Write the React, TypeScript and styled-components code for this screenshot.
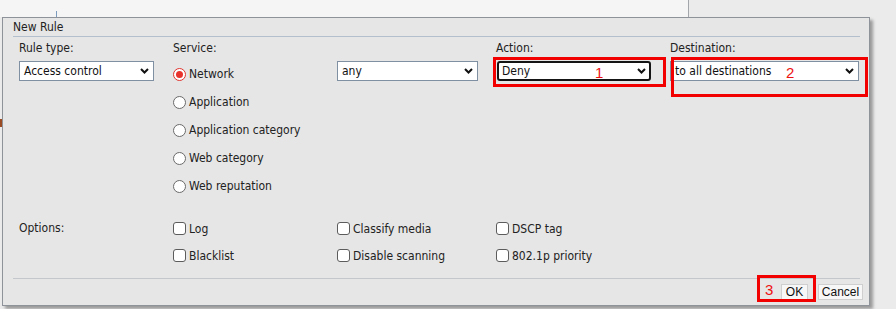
import React from 'react';
import styled, { createGlobalStyle } from 'styled-components';

const Global = createGlobalStyle`
  html, body { margin: 0; padding: 0; }
  body {
    background: #ebebeb;
    font-family: "DejaVu Sans Condensed", "DejaVu Sans", Verdana, sans-serif;
    font-size: 12px;
    color: #222;
    width: 896px;
    height: 309px;
    overflow: hidden;
  }
`;

const Page = styled.div`
  position: relative;
  width: 896px;
  height: 309px;
  background: #ebebeb;
`;

const TopStrip = styled.div`
  display: flex;
  height: 17px;
`;

const BackPanel = styled.div`
  width: 689px;
  height: 17px;
  background: #f5f5f5;
  border-right: 1px solid #a3a6aa;
  display: flex;
  align-items: flex-end;
  padding-left: 56px;
  box-sizing: border-box;
`;

const Tick = styled.div`
  width: 1px;
  height: 6px;
  background: #7d9bbd;
`;

const EdgeMark = styled.div`
  position: absolute;
  left: 0;
  top: 119px;
  width: 2px;
  height: 8px;
  background: #9a4b24;
`;

const Dialog = styled.div`
  margin-left: 2px;
  width: 868px;
  box-sizing: border-box;
  background: #e6e6e6;
  border: 1px solid #8d9399;
  box-shadow: 3px 3px 3px rgba(0, 0, 0, 0.35);
  display: flex;
  flex-direction: column;
`;

const TitleBar = styled.div`
  height: 18px;
  line-height: 18px;
  padding-left: 10px;
  color: #222;
`;

const Divider = styled.div`
  margin: 0 9px 0 10px;
  height: 1px;
  background: #b3bfcc;
`;

const FooterDivider = styled(Divider)`
  margin-top: 9px;
  background: #c4c8cc;
`;

const Body = styled.div`
  padding-left: 16px;
`;

const FieldGrid = styled.div`
  display: grid;
  grid-template-columns: 154px 164px 159px 174px 190px;
  align-items: start;
`;

const OptionGrid = styled(FieldGrid)`
  margin-top: 15px;
`;

const Field = styled.div<{ $indent?: number }>`
  display: flex;
  flex-direction: column;
  padding-left: ${(p) => p.$indent ?? 0}px;
`;

const Label = styled.div`
  height: 14px;
  line-height: 14px;
  margin-top: 4px;
  margin-bottom: 6px;
`;

const SelectBox = styled.div<{ $w: number; $focus?: boolean }>`
  position: relative;
  width: ${(p) => p.$w}px;
  height: 20px;
  box-sizing: border-box;
  display: flex;
  align-items: center;
  justify-content: space-between;
  background: #fff;
  border: ${(p) => (p.$focus ? '2px solid #151515' : '1px solid #7f90a3')};
  border-radius: ${(p) => (p.$focus ? '3px' : '0')};
  padding: 0 ${(p) => (p.$focus ? '3px' : '4px')} 0 ${(p) => (p.$focus ? '3px' : '4px')};
  color: #111;
`;

const Mark = styled.div`
  position: absolute;
  border: 3px solid #f20000;
  box-sizing: border-box;
  pointer-events: none;
`;

const Num = styled.span`
  position: absolute;
  font-family: "Liberation Sans", Arial, sans-serif;
  font-size: 15px;
  line-height: 15px;
  color: #ee1111;
`;

const RadioList = styled.div`
  display: flex;
  flex-direction: column;
  margin-top: -1px;
`;

const OptionRow = styled.div<{ $h: number }>`
  display: flex;
  align-items: center;
  gap: 3px;
  height: ${(p) => p.$h}px;
  white-space: nowrap;
`;

const RadioDot = styled.span<{ $on?: boolean }>`
  width: 13px;
  height: 13px;
  border-radius: 50%;
  box-sizing: border-box;
  border: 1px solid ${(p) => (p.$on ? '#e0332d' : '#6a6a6a')};
  background: #fff;
  display: flex;
  align-items: center;
  justify-content: center;
  flex: none;
  &::after {
    content: '';
    width: 7px;
    height: 7px;
    border-radius: 50%;
    background: ${(p) => (p.$on ? '#e8322c' : 'transparent')};
  }
`;

const CheckBox = styled.span`
  width: 13px;
  height: 13px;
  box-sizing: border-box;
  border: 1px solid #5c5c5c;
  border-radius: 3px;
  background: #fff;
  flex: none;
`;

const OptionLabel = styled.div`
  height: 27px;
  line-height: 27px;
`;

const Footer = styled.div`
  display: flex;
  justify-content: flex-end;
  gap: 10px;
  padding: 5px 6px 5px 0;
`;

const Button = styled.button<{ $w: number }>`
  position: relative;
  width: ${(p) => p.$w}px;
  height: 16px;
  padding: 0;
  margin: 0;
  box-sizing: border-box;
  background: #f7f7f7;
  border: 1px solid #cfcfcf;
  font-family: "Liberation Sans", Arial, sans-serif;
  font-size: 12px;
  line-height: 14px;
  color: #111;
  text-align: center;
`;

const Chevron = () => (
  <svg width="9" height="6" viewBox="0 0 9 6">
    <path d="M1 1 L4.5 4.5 L8 1" fill="none" stroke="#111" strokeWidth="2" />
  </svg>
);

const Select = ({ w, value, focus, children }: { w: number; value: string; focus?: boolean; children?: React.ReactNode }) => (
  <SelectBox $w={w} $focus={focus}>
    <span>{value}</span>
    <Chevron />
    {children}
  </SelectBox>
);

const services = ['Network', 'Application', 'Application category', 'Web category', 'Web reputation'];

export default function App() {
  return (
    <Page>
      <Global />
      <TopStrip>
        <BackPanel>
          <Tick />
        </BackPanel>
      </TopStrip>
      <EdgeMark />
      <Dialog>
        <TitleBar>New Rule</TitleBar>
        <Divider />
        <Body>
          <FieldGrid>
            <Field>
              <Label>Rule type:</Label>
              <Select w={135} value="Access control" />
            </Field>
            <Field>
              <Label>Service:</Label>
              <RadioList>
                {services.map((s, i) => (
                  <OptionRow key={s} $h={28}>
                    <RadioDot $on={i === 0} />
                    <span>{s}</span>
                  </OptionRow>
                ))}
              </RadioList>
            </Field>
            <Field>
              <Label>&nbsp;</Label>
              <Select w={141} value="any" />
            </Field>
            <Field $indent={1}>
              <Label style={{ marginLeft: -1 }}>Action:</Label>
              <Select w={154} value="Deny" focus>
                <Mark style={{ left: -6, top: -6, right: -17, bottom: -8 }} />
                <Num style={{ left: 96, top: 2 }}>1</Num>
              </Select>
            </Field>
            <Field>
              <Label>Destination:</Label>
              <Select w={189} value="to all destinations">
                <Mark style={{ left: 0, top: -5, right: -10, bottom: -17 }} />
                <Num style={{ left: 115, top: 3 }}>2</Num>
              </Select>
            </Field>
          </FieldGrid>
          <OptionGrid>
            <OptionLabel>Options:</OptionLabel>
            <Field>
              <OptionRow $h={27}><CheckBox /><span>Log</span></OptionRow>
              <OptionRow $h={27}><CheckBox /><span>Blacklist</span></OptionRow>
            </Field>
            <Field>
              <OptionRow $h={27}><CheckBox /><span>Classify media</span></OptionRow>
              <OptionRow $h={27}><CheckBox /><span>Disable scanning</span></OptionRow>
            </Field>
            <Field>
              <OptionRow $h={27}><CheckBox /><span>DSCP tag</span></OptionRow>
              <OptionRow $h={27}><CheckBox /><span>802.1p priority</span></OptionRow>
            </Field>
          </OptionGrid>
        </Body>
        <FooterDivider />
        <Footer>
          <Button $w={27}>
            OK
            <Mark style={{ left: -25, top: -10, right: -9, bottom: -3 }} />
            <Num style={{ left: -17, top: -3 }}>3</Num>
          </Button>
          <Button $w={45}>Cancel</Button>
        </Footer>
      </Dialog>
    </Page>
  );
}
